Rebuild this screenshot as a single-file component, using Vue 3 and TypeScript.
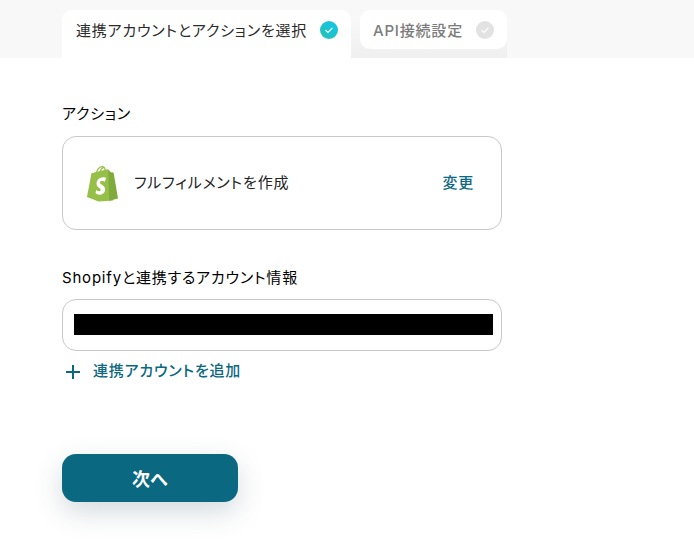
<script setup lang="ts">
interface Tab {
  name: string;
  active: boolean;
}

const activeTab: Tab = { name: '連携アカウントとアクションを選択', active: true };
const restTab: Tab = { name: 'API接続設定', active: false };
</script>

<template>
  <div class="page">
    <div class="tab_wrapper">
      <div class="tab active_tab">
        <span>{{ activeTab.name }}</span>
        <svg class="check" width="18" height="18" viewBox="0 0 18 18">
          <defs>
            <linearGradient id="done" x1="0" y1="1" x2="1" y2="0">
              <stop offset="0" stop-color="#27c0b4" />
              <stop offset="1" stop-color="#12c6ec" />
            </linearGradient>
          </defs>
          <circle cx="9" cy="9" r="9" fill="url(#done)" />
          <path d="M5.6 9.2l2.400 2.300 4.400-4.600" fill="none" stroke="#fff" stroke-width="1.200" />
        </svg>
      </div>
      <div class="tab_rest">
        <div class="tab">
          <span>{{ restTab.name }}</span>
          <svg class="check" width="18" height="18" viewBox="0 0 18 18">
            <circle cx="9" cy="9" r="9" fill="#e2e2e2" />
            <path d="M5.6 9.2l2.400 2.300 4.400-4.600" fill="none" stroke="#fff" stroke-width="1.200" />
          </svg>
        </div>
      </div>
    </div>

    <div class="content">
      <div class="label">アクション</div>
      <div class="action_card">
        <svg class="logo" width="33" height="37" viewBox="0 0 34 38">
          <path d="M1 33 5.600 8.400l16.400-4.200 3.400 3.200L28 36.500 13 37.500z" fill="#95bf47" />
          <path d="M22.800 4.200 25.400 7.400l2.600.2c.3 0 .5.2.5.5L33 34.400 24 36.800z" fill="#7fab3d" />
          <path d="M10.500 9.500C11 5.500 13.500 1.500 16.500 1.500c2.200 0 3.500 2.500 3.500 5.500M14.500 8C15 5 16.500 3 18 3" fill="none" stroke="#95bf47" stroke-width="1.300" />
          <path d="M20.500 13.500l-1.100 3.600c-1-.5-2-.7-3-.6-2 .2-2 1.500-2 1.800.1 1.800 4.900 2.200 5.200 6.400.2 3.300-1.800 5.600-4.600 5.800-3.400.2-5.200-1.800-5.200-1.800l.7-3.100s1.900 1.400 3.400 1.300c1-.1 1.300-.9 1.300-1.400-.2-2.400-4.100-2.200-4.300-6.100-.2-3.300 2-6.600 6.700-6.900 1.800-.1 2.900.6 2.900.6z" fill="#fff" />
        </svg>
        <span class="action_name">フルフィルメントを作成</span>
        <span class="change">変更</span>
      </div>

      <div class="label account_label">Shopifyと連携するアカウント情報</div>
      <div class="account_box">
        <div class="masked"></div>
      </div>
      <div class="add_account">
        <svg class="plus" width="14" height="14" viewBox="0 0 14 14">
          <path d="M7 0v14M0 7h14" stroke="#0b6881" stroke-width="2" fill="none" />
        </svg>
        <span>連携アカウントを追加</span>
      </div>

      <button class="next_btn" type="button">次へ</button>
    </div>
  </div>
</template>

<style scoped>
.page {
  width: 694px;
  height: 543px;
  overflow: hidden;
  background: #fff;
  font-family: Inter, "Noto Sans CJK JP", "Noto Sans", sans-serif;
  font-feature-settings: "palt";
  letter-spacing: 0.05em;
  color: #222;
}

.tab_wrapper {
  display: flex;
  box-sizing: border-box;
  height: 58px;
  padding: 10px 0 0 62px;
  background: #f8f8f8;
}

.tab {
  display: flex;
  align-items: center;
  justify-content: space-between;
  box-sizing: border-box;
  width: 147px;
  height: 39px;
  padding: 0 13px;
  border-radius: 10px;
  background: #fff;
  font-size: 15px;
  font-weight: 500;
  color: #7c7c7c;
}

.tab.active_tab {
  width: 289px;
  height: 48px;
  padding: 0 13px 9px 14px;
  border-radius: 10px 10px 0 0;
  font-weight: 400;
  color: #2a2a2a;
}

.tab_rest {
  height: 48px;
  padding-left: 9px;
  background: linear-gradient(#f8f8f8 20%, #efefef);
}

.content {
  display: flex;
  flex-direction: column;
  align-items: flex-start;
  padding: 46px 0 0 62px;
}

.label {
  font-size: 15px;
  font-weight: 400;
  line-height: 20px;
  color: #000;
}

.action_card {
  display: flex;
  align-items: center;
  box-sizing: border-box;
  width: 440px;
  height: 94px;
  margin-top: 12px;
  padding: 0 27px 4px 23px;
  border: 1px solid #c8c8c8;
  border-radius: 14px;
}

.logo {
  margin-top: 4px;
}

.action_name {
  margin-left: 15px;
  font-size: 15px;
  letter-spacing: 0.055em;
  color: #222;
}

.change {
  margin-left: auto;
  font-size: 15px;
  font-weight: 500;
  color: #0b6881;
}

.account_label {
  margin-top: 38px;
}

.account_box {
  display: flex;
  align-items: center;
  box-sizing: border-box;
  width: 440px;
  height: 52px;
  margin-top: 11px;
  padding: 0 8px 1px 11px;
  border: 1px solid #c8c8c8;
  border-radius: 14px;
}

.masked {
  width: 100%;
  height: 21px;
  background: #000;
}

.add_account {
  display: flex;
  align-items: center;
  gap: 13px;
  margin: 9px 0 0 4px;
  font-size: 15px;
  font-weight: 500;
  line-height: 22px;
  color: #0b6881;
}

.plus {
  margin-top: 1px;
}

.next_btn {
  width: 176px;
  height: 48px;
  margin-top: 72px;
  border: 0;
  border-radius: 14px;
  background: #0b6881;
  font-family: inherit;
  font-size: 18px;
  font-weight: 700;
  letter-spacing: 0;
  color: #fff;
  box-shadow: 0 10px 28px rgba(40, 70, 90, 0.2);
}
</style>
